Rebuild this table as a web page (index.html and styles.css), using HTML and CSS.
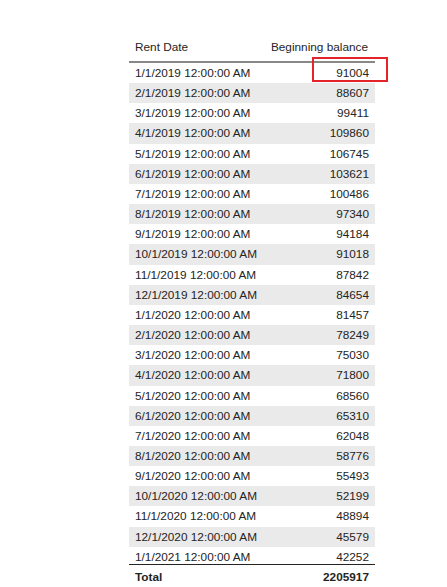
FILE: index.html
```html
<!DOCTYPE html>
<html>
<head>
<meta charset="utf-8">
<link rel="stylesheet" href="styles.css">
</head>
<body>
<div class="page">
  <div class="table">
    <div class="head">
      <span>Rent Date</span>
      <span>Beginning balance</span>
    </div>
    <div class="body">
      <div class="row"><span>1/1/2019 12:00:00 AM</span><span class="num">91004</span></div>
      <div class="row"><span>2/1/2019 12:00:00 AM</span><span class="num">88607</span></div>
      <div class="row"><span>3/1/2019 12:00:00 AM</span><span class="num">99411</span></div>
      <div class="row"><span>4/1/2019 12:00:00 AM</span><span class="num">109860</span></div>
      <div class="row"><span>5/1/2019 12:00:00 AM</span><span class="num">106745</span></div>
      <div class="row"><span>6/1/2019 12:00:00 AM</span><span class="num">103621</span></div>
      <div class="row"><span>7/1/2019 12:00:00 AM</span><span class="num">100486</span></div>
      <div class="row"><span>8/1/2019 12:00:00 AM</span><span class="num">97340</span></div>
      <div class="row"><span>9/1/2019 12:00:00 AM</span><span class="num">94184</span></div>
      <div class="row"><span>10/1/2019 12:00:00 AM</span><span class="num">91018</span></div>
      <div class="row"><span>11/1/2019 12:00:00 AM</span><span class="num">87842</span></div>
      <div class="row"><span>12/1/2019 12:00:00 AM</span><span class="num">84654</span></div>
      <div class="row"><span>1/1/2020 12:00:00 AM</span><span class="num">81457</span></div>
      <div class="row"><span>2/1/2020 12:00:00 AM</span><span class="num">78249</span></div>
      <div class="row"><span>3/1/2020 12:00:00 AM</span><span class="num">75030</span></div>
      <div class="row"><span>4/1/2020 12:00:00 AM</span><span class="num">71800</span></div>
      <div class="row"><span>5/1/2020 12:00:00 AM</span><span class="num">68560</span></div>
      <div class="row"><span>6/1/2020 12:00:00 AM</span><span class="num">65310</span></div>
      <div class="row"><span>7/1/2020 12:00:00 AM</span><span class="num">62048</span></div>
      <div class="row"><span>8/1/2020 12:00:00 AM</span><span class="num">58776</span></div>
      <div class="row"><span>9/1/2020 12:00:00 AM</span><span class="num">55493</span></div>
      <div class="row"><span>10/1/2020 12:00:00 AM</span><span class="num">52199</span></div>
      <div class="row"><span>11/1/2020 12:00:00 AM</span><span class="num">48894</span></div>
      <div class="row"><span>12/1/2020 12:00:00 AM</span><span class="num">45579</span></div>
      <div class="row"><span>1/1/2021 12:00:00 AM</span><span class="num">42252</span></div>
    </div>
    <div class="total">
      <span>Total</span>
      <span class="num">2205917</span>
    </div>
    <div class="highlight"></div>
  </div>
</div>
</body>
</html>
```

FILE: styles.css
```css
html, body {
  margin: 0;
  padding: 0;
  background: #ffffff;
}

.page {
  width: 447px;
  height: 587px;
  overflow: hidden;
  padding: 34px 0 0 129px;
  box-sizing: border-box;
  font-family: "Liberation Sans", Arial, sans-serif;
  font-size: 11.8px;
  color: #252423;
}

.table {
  position: relative;
  width: 246px;
  display: flex;
  flex-direction: column;
}

.head {
  height: 27px;
  line-height: 25px;
  padding: 1px 7px 0 6px;
  box-sizing: border-box;
  border-bottom: 2px solid #8a8886;
  display: flex;
  justify-content: space-between;
  height: 29px;
}

.body {
  height: 501px;
  overflow: hidden;
}

.row {
  height: 20.17px;
  line-height: 21px;
  display: flex;
  justify-content: space-between;
  padding: 0 6px 0 6px;
}

.row:nth-child(even) {
  background: #eaeaea;
}

.num {
  text-align: right;
}

.total {
  border-top: 1px solid #252423;
  line-height: 24px;
  font-weight: bold;
  display: flex;
  justify-content: space-between;
  padding: 0 6px 0 6px;
}

.highlight {
  position: absolute;
  left: 183px;
  top: 23px;
  width: 76px;
  height: 25px;
  border: 2px solid #e3242b;
  box-sizing: border-box;
}
```
